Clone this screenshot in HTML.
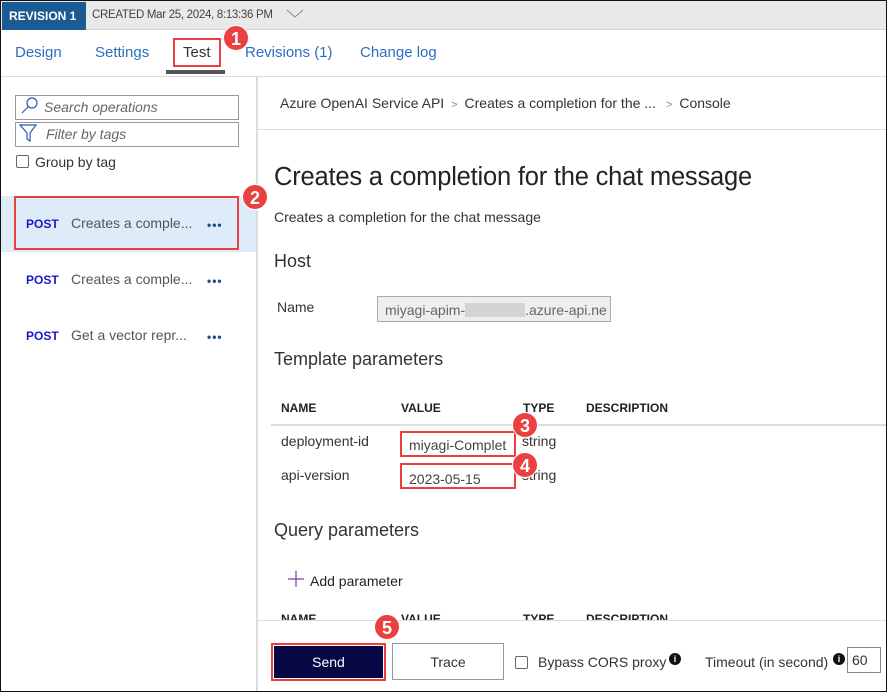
<!DOCTYPE html>
<html><head><style>
*{margin:0;padding:0;box-sizing:border-box}
body{width:887px;height:692px;position:relative;overflow:hidden;background:#fff;font-family:"Liberation Sans",sans-serif;color:#333}
.a{position:absolute;white-space:nowrap}
.badge{position:absolute;width:26px;height:26px;border-radius:50%;background:#e8413f;color:#fff;font-weight:bold;font-size:18px;text-align:center;line-height:26px;border:1px solid #fff}
.red{position:absolute;border:2px solid #e8413f}
.post{color:#1818c8;font-weight:bold;font-size:12px}
.op{font-size:14px;color:#555}
.dots{font-size:12px;color:#1e4c8c;font-weight:bold;letter-spacing:1px}
.th{font-size:12px;font-weight:bold;color:#222}
</style></head><body>
<div class="a" style="left:0;top:0;width:887px;height:692px;border:1px solid #111;z-index:20;pointer-events:none"></div>
<div class="a" style="left:0;top:0;width:887px;height:30px;background:#e9e9e9;border-bottom:1px solid #d0d0d0"></div>
<div class="a" style="left:2px;top:2px;width:84px;height:28px;background:#1b5a93;color:#fff;font-weight:bold;font-size:12px;line-height:28px;padding-left:7px">REVISION 1</div>
<div class="a" style="left:92px;top:9px;font-size:11.5px;letter-spacing:-0.3px;color:#444">CREATED Mar 25, 2024, 8:13:36 PM</div>
<svg class="a" style="left:286px;top:9px" width="18" height="10"><path d="M1 1 L9 8 L17 1" fill="none" stroke="#888" stroke-width="1"/></svg>
<div class="a" style="left:0;top:76px;width:887px;height:1px;background:#ddd"></div>
<div class="a" style="left:15px;top:44px;font-size:15px;color:#2a6fbf">Design</div>
<div class="a" style="left:95px;top:44px;font-size:15px;color:#2a6fbf">Settings</div>
<div class="a" style="left:183px;top:44px;font-size:15px;color:#333">Test</div>
<div class="red" style="left:173px;top:38px;width:48px;height:29px"></div>
<div class="a" style="left:166px;top:70px;width:59px;height:4px;background:#555"></div>
<div class="a" style="left:245px;top:44px;font-size:15px;color:#2a6fbf">Revisions (1)</div>
<div class="a" style="left:360px;top:44px;font-size:15px;color:#2a6fbf">Change log</div>
<div class="badge" style="left:223px;top:25px">1</div>
<div class="a" style="left:256px;top:77px;width:2px;height:615px;background:#ddd"></div>
<div class="a" style="left:15px;top:95px;width:224px;height:25px;border:1px solid #999"></div>
<svg class="a" style="left:20px;top:96px" width="20" height="20"><circle cx="12" cy="7" r="5" fill="none" stroke="#2a5ab0" stroke-width="1.2"/><path d="M8.5 10.5 L2 17" stroke="#2a5ab0" stroke-width="1.2"/></svg>
<div class="a" style="left:44px;top:99px;font-size:14px;font-style:italic;color:#666">Search operations</div>
<div class="a" style="left:15px;top:122px;width:224px;height:25px;border:1px solid #999"></div>
<svg class="a" style="left:19px;top:124px" width="18" height="20"><path d="M1 1 L17 1 L11 9 L11 17 L8 15 L8 9 Z" fill="none" stroke="#2a5ab0" stroke-width="1.2"/></svg>
<div class="a" style="left:46px;top:126px;font-size:14px;font-style:italic;color:#666">Filter by tags</div>
<div class="a" style="left:16px;top:155px;width:13px;height:13px;border:1px solid #666;border-radius:2px"></div>
<div class="a" style="left:35px;top:154px;font-size:14px;color:#333">Group by tag</div>
<div class="a" style="left:1px;top:196px;width:255px;height:56px;background:#deecf9"></div>
<div class="red" style="left:14px;top:196px;width:225px;height:54px"></div>
<div class="badge" style="left:242px;top:184px">2</div>
<div class="a post" style="left:26px;top:217px">POST</div><div class="a op" style="left:71px;top:215px">Creates a comple...</div><div class="a dots" style="left:207px;top:218px">•••</div>
<div class="a post" style="left:26px;top:273px">POST</div><div class="a op" style="left:71px;top:271px">Creates a comple...</div><div class="a dots" style="left:207px;top:274px">•••</div>
<div class="a post" style="left:26px;top:329px">POST</div><div class="a op" style="left:71px;top:327px">Get a vector repr...</div><div class="a dots" style="left:207px;top:330px">•••</div>
<div class="a" style="left:280px;top:95px;font-size:14px;color:#333">Azure OpenAI Service API <span style="color:#888;font-size:11px">&nbsp;&gt;&nbsp;</span> Creates a completion for the ... <span style="color:#888;font-size:11px">&nbsp;&nbsp;&gt;&nbsp;</span> Console</div>
<div class="a" style="left:258px;top:129px;width:629px;height:1px;background:#ddd"></div>
<div class="a" style="left:274px;top:163px;font-size:25.5px;letter-spacing:-0.2px;color:#222">Creates a completion for the chat message</div>
<div class="a" style="left:274px;top:209px;font-size:14px;color:#333">Creates a completion for the chat message</div>
<div class="a" style="left:274px;top:251px;font-size:18px;color:#333">Host</div>
<div class="a" style="left:277px;top:299px;font-size:14px;color:#333">Name</div>
<div class="a" style="left:377px;top:296px;width:234px;height:26px;background:#eee;border:1px solid #aaa;font-size:14px;color:#666;padding:5px 0 0 7px;overflow:hidden">miyagi-apim-<span style="display:inline-block;width:60px;height:14px;background:#d4d4d4;vertical-align:-2px"></span>.azure-api.ne</div>
<div class="a" style="left:274px;top:349px;font-size:18px;color:#333">Template parameters</div>
<div class="a th" style="left:281px;top:401px">NAME</div><div class="a th" style="left:401px;top:401px">VALUE</div><div class="a th" style="left:523px;top:401px">TYPE</div><div class="a th" style="left:586px;top:401px">DESCRIPTION</div>
<div class="a" style="left:271px;top:424px;width:616px;height:2px;background:#ddd"></div>
<div class="a" style="left:281px;top:433px;font-size:14px">deployment-id</div>
<div class="a" style="left:281px;top:467px;font-size:14px">api-version</div>
<div class="a" style="left:522px;top:433px;font-size:14px">string</div>
<div class="a" style="left:522px;top:467px;font-size:14px">string</div>
<div class="red" style="left:400px;top:431px;width:116px;height:26px;background:#fff;font-size:14px;color:#444;padding:4px 0 0 7px;overflow:hidden">miyagi-Complet</div>
<div class="red" style="left:400px;top:463px;width:116px;height:26px;background:#fff;font-size:14px;color:#444;padding:6px 0 0 7px">2023-05-15</div>
<div class="badge" style="left:512px;top:412px">3</div>
<div class="badge" style="left:512px;top:452px">4</div>
<div class="a" style="left:274px;top:520px;font-size:18px;color:#333">Query parameters</div>
<svg class="a" style="left:288px;top:571px" width="16" height="16"><path d="M8 0V16M0 8H16" stroke="#6a3fb0" stroke-width="1.2"/></svg>
<div class="a" style="left:310px;top:573px;font-size:14px;color:#222">Add parameter</div>
<div class="a th" style="left:281px;top:612px">NAME</div><div class="a th" style="left:401px;top:612px">VALUE</div><div class="a th" style="left:523px;top:612px">TYPE</div><div class="a th" style="left:586px;top:612px">DESCRIPTION</div>
<div class="a" style="left:258px;top:620px;width:629px;height:72px;background:#fff;border-top:1px solid #ddd"></div>
<div class="red" style="left:271px;top:643px;width:115px;height:38px;background:#fff"></div>
<div class="a" style="left:274px;top:646px;width:109px;height:32px;background:#070746;color:#fff;font-size:14px;text-align:center;line-height:32px">Send</div>
<div class="a" style="left:392px;top:643px;width:112px;height:37px;border:1px solid #999;font-size:14px;text-align:center;line-height:36px;color:#333">Trace</div>
<div class="badge" style="left:374px;top:614px">5</div>
<div class="a" style="left:515px;top:656px;width:13px;height:13px;border:1px solid #666;border-radius:2px"></div>
<div class="a" style="left:538px;top:654px;font-size:14px;color:#333">Bypass CORS proxy</div>
<div class="a" style="left:669px;top:653px;width:12px;height:12px;border-radius:50%;background:#111;color:#fff;font-size:9px;font-weight:bold;text-align:center;line-height:12px">i</div>
<div class="a" style="left:705px;top:654px;font-size:14px;color:#333">Timeout (in second)</div>
<div class="a" style="left:833px;top:653px;width:12px;height:12px;border-radius:50%;background:#111;color:#fff;font-size:9px;font-weight:bold;text-align:center;line-height:12px">i</div>
<div class="a" style="left:847px;top:647px;width:34px;height:26px;border:1px solid #888;font-size:14px;padding:4px 0 0 4px">60</div>
</body></html>
